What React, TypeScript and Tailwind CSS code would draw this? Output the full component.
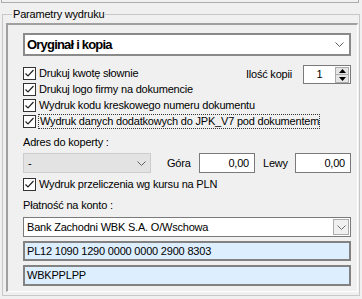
import * as React from "react"

const Check = () => (
  <span className="flex h-[13px] w-[13px] shrink-0 items-center justify-center border border-[#333333] bg-white">
    <svg width="11" height="11" viewBox="0 0 11 11">
      <path d="M1.5 5.5 L4 8 L9.5 2" fill="none" stroke="#222222" strokeWidth="1.2" />
    </svg>
  </span>
)

const Chevron = ({ color = "#606060" }: { color?: string }) => (
  <svg width="9" height="5" viewBox="0 0 9 5">
    <path d="M0.5 0.5 L4.5 4.5 L8.5 0.5" fill="none" stroke={color} strokeWidth="1" />
  </svg>
)

const CheckRow = ({ label, focused = false }: { label: string; focused?: boolean }) => (
  <div className="flex h-[16px] items-start">
    <div className="mt-[2px]">
      <Check />
    </div>
    <span
      className={
        focused
          ? "ml-[2px] mt-[1px] border border-dotted border-[#333333] pl-[1px] leading-[13px]"
          : "ml-[3px] mt-[2px] leading-[13px]"
      }
    >
      {label}
    </span>
  </div>
)

export default function App() {
  return (
    <div className="h-[299px] w-[362px] overflow-hidden bg-[#f0f0f0] font-['Liberation_Sans',Arial,sans-serif] text-[11px] tracking-[-0.2px] text-black">
      <div className="ml-[1px] mr-[3px] h-[3px] border-x border-b border-[#adadad] bg-[#f0f0f0]" />

      <fieldset className="ml-[2px] mr-[3px] mt-[5px] border border-[#c8c8c8] pb-[3px] pl-[3px] pr-[1px]">
        <legend className="ml-[6px] px-[1px] leading-[13px]">Parametry wydruku</legend>

        <div className="mt-[2px] h-[269px] border-l-2 border-t-2 border-r border-b border-l-[#a0a0a0] border-t-[#a0a0a0] border-r-white border-b-white pl-[15px] pr-[6px]">
          {/* print variant */}
          <div className="mt-[8px] flex h-[23px] items-center justify-between border-2 border-[#8a8a8a] bg-white pl-[2px] pr-[5px]">
            <span className="text-[13px] font-bold leading-none tracking-[-0.8px]">Oryginał i kopia</span>
            <Chevron />
          </div>

          <div className="mt-[9px] flex flex-col">
            <div className="flex h-[16px] items-start justify-between">
              <CheckRow label="Drukuj kwotę słownie" />
              <div className="flex items-center">
                <span className="mr-[11px] leading-[19px]">Ilość kopii</span>
                <div className="flex h-[19px] w-[48px] border border-[#7a7a7a] bg-white">
                  <span className="flex flex-1 items-center justify-center leading-none">1</span>
                  <div className="mr-[1px] mt-[1px] flex w-[14px] flex-col">
                    <div className="flex h-[8px] items-center justify-center border border-[#acacac] bg-[#e5e5e5]">
                      <svg width="7" height="4" viewBox="0 0 7 4">
                        <path d="M0 4 L3.5 0 L7 4 Z" fill="#000000" />
                      </svg>
                    </div>
                    <div className="flex h-[8px] items-center justify-center border border-t-0 border-[#acacac] bg-[#e5e5e5]">
                      <svg width="7" height="4" viewBox="0 0 7 4">
                        <path d="M0 0 L7 0 L3.5 4 Z" fill="#000000" />
                      </svg>
                    </div>
                  </div>
                </div>
              </div>
            </div>
            <CheckRow label="Drukuj logo firmy na dokumencie" />
            <CheckRow label="Wydruk kodu kreskowego numeru dokumentu" />
            <CheckRow label="Wydruk danych dodatkowych do JPK_V7 pod dokumentem" focused />
          </div>

          <div className="mt-[6px] leading-[14px]">Adres do koperty :</div>

          <div className="mt-[4px] flex h-[20px] items-center">
            <div className="flex h-[20px] w-[128px] items-center justify-between border border-[#cccccc] bg-[#e3e3e3] pl-[4px] pr-[4px]">
              <span>-</span>
              <Chevron />
            </div>
            <span className="ml-[16px] w-[32px]">Góra</span>
            <div className="flex h-[20px] w-[56px] items-center justify-end border border-[#7a7a7a] bg-white pr-[5px]">
              0,00
            </div>
            <span className="ml-[8px] w-[32px]">Lewy</span>
            <div className="flex h-[20px] w-[56px] items-center justify-end border border-[#7a7a7a] bg-white pr-[5px]">
              0,00
            </div>
          </div>

          <div className="mt-[3px]">
            <CheckRow label="Wydruk przeliczenia wg kursu na PLN" />
          </div>

          <div className="mt-[6px] leading-[14px]">Płatność na konto :</div>

          <div className="mt-[5px] flex h-[20px] items-center justify-between border border-[#7a7a7a] bg-white pl-[3px] pr-[1px]">
            <span>Bank Zachodni WBK S.A. O/Wschowa</span>
            <div className="flex h-[16px] w-[16px] items-center justify-center border border-[#acacac] bg-[#f0f0f0]">
              <Chevron color="#707070" />
            </div>
          </div>

          <div className="mt-[4px] flex h-[20px] items-center border-2 border-[#828282] bg-[#ddeeff] pl-[2px]">
            PL12 1090 1290 0000 0000 2900 8303
          </div>

          <div className="mt-[4px] flex h-[21px] items-center border-2 border-[#828282] bg-[#ddeeff] pl-[2px]">
            WBKPPLPP
          </div>
        </div>
      </fieldset>
    </div>
  )
}
